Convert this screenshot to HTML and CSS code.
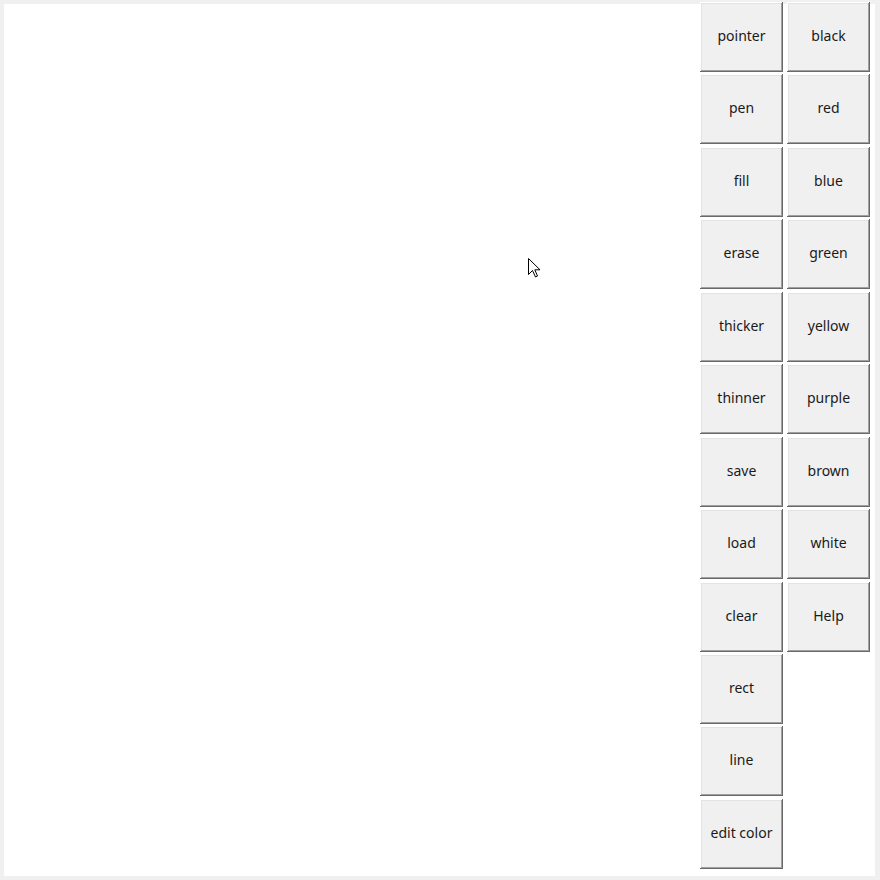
FILE: index.html
```html
<!DOCTYPE html>
<html>
<head>
<meta charset="utf-8">
<link rel="stylesheet" href="styles.css">
</head>
<body>
<div class="app">
  <div class="canvas">
    <div class="tools">
      <button class="btn">pointer</button><button class="btn">black</button>
      <button class="btn">pen</button><button class="btn">red</button>
      <button class="btn">fill</button><button class="btn">blue</button>
      <button class="btn">erase</button><button class="btn">green</button>
      <button class="btn">thicker</button><button class="btn">yellow</button>
      <button class="btn">thinner</button><button class="btn">purple</button>
      <button class="btn">save</button><button class="btn">brown</button>
      <button class="btn">load</button><button class="btn">white</button>
      <button class="btn">clear</button><button class="btn">Help</button>
      <button class="btn">rect</button><span></span>
      <button class="btn">line</button><span></span>
      <button class="btn">edit color</button><span></span>
    </div>
  </div>
  <svg class="cursor" width="13" height="20" viewBox="0 0 13 20"><path d="M0.5 0.5 L0.5 16.5 L4.5 12.5 L7.5 19 L9.5 18 L6.8 11.8 L12 11.8 Z" fill="#fff" stroke="#000" stroke-width="1" stroke-linejoin="miter"/></svg>
</div>
</body>
</html>
```
FILE: styles.css
```css
html, body {
  margin: 0;
  padding: 0;
  background: #f0f0f0;
}
.app {
  width: 880px;
  height: 880px;
  box-sizing: border-box;
  padding: 4px 5px 4px 4px;
  position: relative;
}
.canvas {
  background: #ffffff;
  height: 872px;
  display: flex;
  justify-content: flex-end;
  align-items: flex-start;
  padding-right: 5px;
}
.tools {
  margin-top: -2px;
  display: grid;
  grid-template-columns: 83px 83px;
  grid-auto-rows: 70px;
  column-gap: 4px;
  row-gap: 2.45px;
}
.btn {
  margin: 0;
  padding: 0 0 3px 0;
  border: none;
  background: #f0f0f0;
  font-family: "Noto Sans", "Open Sans", sans-serif;
  font-size: 14px;
  color: #1a1a1a;
  box-shadow: inset -1px -1px 0 #696969, inset 1px 1px 0 #ffffff, inset -2px -2px 0 #a0a0a0, inset 2px 2px 0 #e3e3e3;
}
.cursor {
  position: absolute;
  left: 528px;
  top: 258px;
}
```
